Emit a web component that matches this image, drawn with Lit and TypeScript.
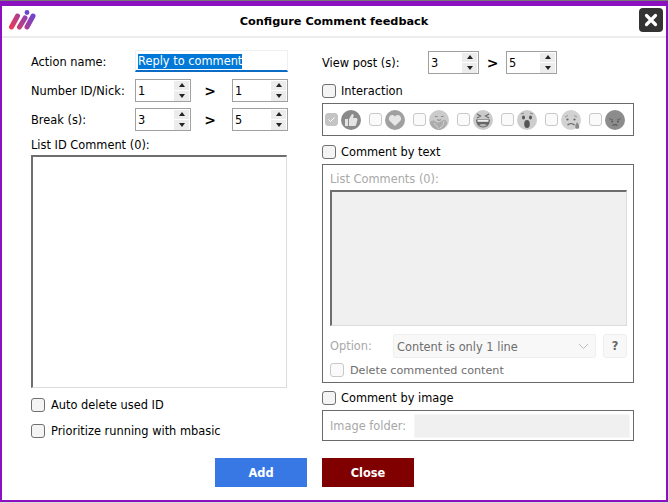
import { LitElement, html, css, svg } from "lit";
import { customElement } from "lit/decorators.js";

const faces = [
  svg`<circle cx="10" cy="10" r="10" fill="#8a8a8a"/><path d="M4 9h3v7H4zM8 9l3-5c1.500 0 2 1 1.600 2.400L12 8h3.400c1 0 1.400 1 1 2l-1.300 5c-.2.700-.7 1-1.400 1H8z" fill="#e4e4e4"/>`,
  svg`<circle cx="10" cy="10" r="10" fill="#a0a0a0"/><path d="M10 16l-5.400-5.200C2.800 8.500 4.600 5 7.200 5c1.300 0 2.200.7 2.800 1.700C10.600 5.700 11.500 5 12.800 5c2.600 0 4.400 3.500 2.600 5.800z" fill="#e6e6e6"/>`,
  svg`<circle cx="10" cy="10" r="10" fill="#cbcbcb"/><path d="M6 6.500h2.500M12 6.500h2.500" stroke="#888" stroke-width="1.200"/><path d="M8 9.500c1 1 3 1 4 0" stroke="#888" fill="none"/><path d="M1 13c1-3 4-3 6-1 2 1 5 0 7-2 2-1 4 1 4 3-1 3-4 7-8 7-4 0-8-3-9-7z" fill="#ababab"/><path d="M5 13c1 2 4 4 5 6M15 11c0 3-2 6-4 7" stroke="#d8d8d8" fill="none"/>`,
  svg`<circle cx="10" cy="10" r="10" fill="#cbcbcb"/><path d="M4 4l3.500 2L4 8M16 4l-3.500 2L16 8" stroke="#666" stroke-width="1.200" fill="none"/><path d="M3 9.500h14c0 5-3 8-7 8s-7-3-7-8z" fill="#666"/><path d="M4.500 10h11v1.800h-11z" fill="#eee"/><path d="M6 15c2-1.500 6-1.500 8 0-2 2-6 2-8 0z" fill="#b4b4b4"/>`,
  svg`<circle cx="10" cy="10" r="10" fill="#cdcdcd"/><ellipse cx="6.500" cy="7.500" rx="1.500" ry="2" fill="#555"/><ellipse cx="13.500" cy="7.500" rx="1.500" ry="2" fill="#555"/><path d="M4 4l3-1M16 4l-3-1" stroke="#888"/><ellipse cx="10" cy="14" rx="2.800" ry="4" fill="#555"/>`,
  svg`<circle cx="10" cy="10" r="10" fill="#d2d2d2"/><path d="M4 7l3-1.500M16 7l-3-1.500" stroke="#999"/><circle cx="6.500" cy="9.500" r="1.100" fill="#666"/><circle cx="13.500" cy="9.500" r="1.100" fill="#666"/><path d="M6.500 15c2-2 5-2 7 0" stroke="#666" stroke-width="1.200" fill="none"/><path d="M16 12c1.500 2.500 3 4 2 6-1 1.500-4 1-3.800-1.500 0-1.500 1-3 1.800-4.500z" fill="#8a8a8a"/>`,
  svg`<circle cx="10" cy="10" r="10" fill="#8c8c8c"/><path d="M4 8.500l4 1.500M16 8.500l-4 1.500" stroke="#6a6a6a" stroke-width="1.200"/><circle cx="7" cy="11.500" r="1" fill="#5a5a5a"/><circle cx="13" cy="11.500" r="1" fill="#5a5a5a"/><path d="M7.500 15.500c1.500-1 3.500-1 5 0" stroke="#5a5a5a" stroke-width="1.100" fill="none"/>`,
];

@customElement("app-root")
export class AppRoot extends LitElement {
  static styles = css`
    :host { display: block; width: 669px; height: 503px; overflow: hidden; background: #d8d8d8;
      font-family: "DejaVu Sans", Verdana, sans-serif; font-size: 11.4px; color: #000; }
    .win { box-sizing: border-box; width: 668px; height: 502px; border-top: 1px solid #777; background: #fff; }
    .inner { box-sizing: border-box; height: 501px; border: 2px solid #8a10c0; border-top-width: 5px; display: flex; flex-direction: column; }
    .title { height: 30px; flex: none; border-bottom: 2px solid #ececec; position: relative;
      display: flex; align-items: center; justify-content: center; font-weight: 700; font-size: 11.3px; }
    .logo { position: absolute; left: 6px; top: 3px; }
    .x { position: absolute; right: 3px; top: 2px; width: 24px; height: 24px; border-radius: 4px; background: #333;
      display: flex; align-items: center; justify-content: center; }
    .body { display: grid; grid-template-columns: 257px 312px; column-gap: 34px; padding: 12px 0 0 29px; }
    .col { display: flex; flex-direction: column; }
    .row { display: flex; align-items: center; }
    .lab { flex: none; }
    .gt { font-weight: 700; font-size: 14px; text-align: center; }
    .gt.wide { width: 38px; padding-right: 3px; }
    .gt.narrow { width: 27px; }
    .spin { box-sizing: border-box; border: 1px solid #a0a0a0; height: 23px; display: flex; align-items: center;
      justify-content: space-between; padding: 0 1px 0 2px; background: #fff; }
    .arrows { width: 15px; display: flex; flex-direction: column; gap: 1px; }
    .arrows span { height: 9.5px; background: #ececec; display: flex; align-items: center; justify-content: center; }
    .up { width: 0; height: 0; border: 3.5px solid transparent; border-top: 0; border-bottom: 4px solid #222; }
    .down { width: 0; height: 0; border: 3.5px solid transparent; border-bottom: 0; border-top: 4px solid #222; }
    .name { box-sizing: border-box; width: 153px; height: 22px; border: 1px solid #eef0f2; border-bottom: 2px solid #0a6cc4;
      display: flex; align-items: center; padding: 1px 0 0 2px; }
    .sel { background: #0078d7; color: #fff; line-height: 15px; }
    .first { padding-top: 1px; }
    .cb { box-sizing: border-box; width: 14px; height: 14px; flex: none; border: 1px solid #707070; border-radius: 3px; background: #f4f4f4; }
    .cb.dis { border-color: #c8c8c8; background: #fafafa; }
    .cb.on { border-color: #c4c4c4; background: #c4c4c4; display: flex; align-items: center; justify-content: center; }
    .chk { display: flex; align-items: center; gap: 5px; height: 14px; }
    .chk.wide { gap: 6px; }
    .list-label { margin-top: 7px; height: 14px; line-height: 14px; }
    .list { box-sizing: border-box; width: 256px; height: 233px; margin-top: 3px; border: 1px solid #dcdcdc;
      border-top: 2px solid #6e6e6e; border-left: 2px solid #6e6e6e; background: #fff; }
    .box { box-sizing: border-box; border: 1px solid #6a6a6a; width: 312px; }
    .react { height: 33px; margin-top: 5px; display: flex; align-items: center; padding-left: 2px; gap: 3px; }
    .re { display: flex; align-items: center; gap: 3px; width: 41px; }
    .re .cb { width: 13px; height: 13px; }
    .txt { height: 219px; margin-top: 5px; padding: 7px 6px 0 7px; color: #a8a8a8; display: flex; flex-direction: column; }
    .txt-label { height: 14px; line-height: 14px; }
    .area { box-sizing: border-box; height: 136px; width: 297px; margin-top: 4px; background: #f0f0f0;
      border: 1px solid #dcdcdc; border-top: 2px solid #6e6e6e; border-left: 2px solid #6e6e6e; }
    .opt { margin-top: 8px; padding-top: 0; }
    .select { box-sizing: border-box; width: 203px; height: 24px; border: 1px solid #efefef; border-radius: 2px; background: #f8f8f8;
      padding: 1px 6px 0 3px; color: #6e6e6e; display: flex; align-items: center; justify-content: space-between; }
    .q { box-sizing: border-box; width: 24px; height: 24px; margin-left: 7px; border: 1px solid #eee; border-radius: 3px;
      background: #f8f8f8; color: #666; font-weight: 700; display: flex; align-items: center; justify-content: center; }
    .del { color: #6e6e6e; margin-top: 4px; gap: 6px; font-size: 11.2px; padding-top: 1px; }
    .img { height: 31px; margin-top: 5px; padding: 0 3px 0 7px; color: #a8a8a8; display: flex; align-items: center; }
    .folder { box-sizing: border-box; width: 216px; height: 24px; background: #f0f0f0; border: 1px solid #f6f6f6; }
    .foot { display: flex; gap: 15px; margin-top: 12px; padding-left: 213px; }
    .btn { width: 92px; height: 29px; color: #fff; font-weight: 700; font-size: 11.4px; display: flex; align-items: center; justify-content: center; }
    .add { background: #3878e4; }
    .close { background: #800000; }
    .main { height: 408px; flex: none; }
  `;

  private spin(v: string, w: number) {
    return html`<div class="spin" style="width:${w}px"><span>${v}</span>
      <div class="arrows"><span><i class="up"></i></span><span><i class="down"></i></span></div></div>`;
  }

  render() {
    return html`<div class="win"><div class="inner">
      <div class="title">
        <svg class="logo" width="30" height="24" viewBox="0 0 30 24">
          <defs><linearGradient id="g" gradientUnits="userSpaceOnUse" x1="2" y1="18" x2="26" y2="6">
            <stop offset="0" stop-color="#e83c55"/><stop offset="1" stop-color="#6f42d0"/></linearGradient></defs>
          <g stroke="url(#g)" stroke-width="5" stroke-linecap="round">
            <path d="M3.5 18L9.5 7"/>
            <path d="M11.5 18L17 9"/>
            <path d="M19 18L25 7"/>
          </g>
          <circle cx="19" cy="3.5" r="2.4" fill="#6a45d0"/>
        </svg>
        Configure Comment feedback
        <div class="x"><svg width="14" height="14" viewBox="0 0 14 14"><path d="M2.5 2.5l9 9M11.5 2.5l-9 9" stroke="#fff" stroke-width="3.2" stroke-linecap="round"/></svg></div>
      </div>
      <div class="main"><div class="body">
        <div class="col">
          <div class="row" style="height:22px"><span class="lab first" style="width:104px">Action name:</span>
            <div class="name"><span class="sel">Reply to comment</span></div></div>
          <div class="row" style="margin-top:7px"><span class="lab" style="width:104px">Number ID/Nick:</span>
            ${this.spin("1", 56)}<span class="gt wide">&gt;</span>${this.spin("1", 56)}</div>
          <div class="row" style="margin-top:6px"><span class="lab" style="width:104px">Break (s):</span>
            ${this.spin("3", 56)}<span class="gt wide">&gt;</span>${this.spin("5", 56)}</div>
          <div class="list-label">List ID Comment (0):</div>
          <div class="list"></div>
          <div class="chk wide" style="margin-top:10px"><span class="cb"></span>Auto delete used ID</div>
          <div class="chk wide" style="margin-top:12px"><span class="cb"></span>Prioritize running with mbasic</div>
        </div>
        <div class="col">
          <div class="row" style="margin-top:1px"><span class="lab" style="width:106px">View post (s):</span>
            ${this.spin("3", 51)}<span class="gt narrow">&gt;</span>${this.spin("5", 51)}</div>
          <div class="chk" style="margin-top:10px"><span class="cb"></span>Interaction</div>
          <div class="box react">
            ${faces.map((f, i) => html`<div class="re">
              <span class="cb ${i === 0 ? "on" : "dis"}">${i === 0 ? html`<svg width="9" height="9" viewBox="0 0 9 9"><path d="M1.5 4.5l2 2 4-4" stroke="#fff" fill="none"/></svg>` : ""}</span>
              <svg width="20" height="20" viewBox="0 0 20 20">${f}</svg></div>`)}
          </div>
          <div class="chk" style="margin-top:9px"><span class="cb"></span>Comment by text</div>
          <div class="box txt">
            <div class="txt-label">List Comments (0):</div>
            <div class="area"></div>
            <div class="row opt"><span class="lab" style="width:63px">Option:</span>
              <div class="select">Content is only 1 line
                <svg width="11" height="7" viewBox="0 0 11 7"><path d="M1 1l4.500 4.500L10 1" stroke="#bbb" fill="none"/></svg></div>
              <div class="q">?</div></div>
            <div class="chk del"><span class="cb dis"></span>Delete commented content</div>
          </div>
          <div class="chk" style="margin-top:8px"><span class="cb"></span>Comment by image</div>
          <div class="box img"><span class="lab" style="width:84px">Image folder:</span><div class="folder"></div></div>
        </div>
      </div></div>
      <div class="foot"><div class="btn add">Add</div><div class="btn close">Close</div></div>
    </div></div>`;
  }
}
